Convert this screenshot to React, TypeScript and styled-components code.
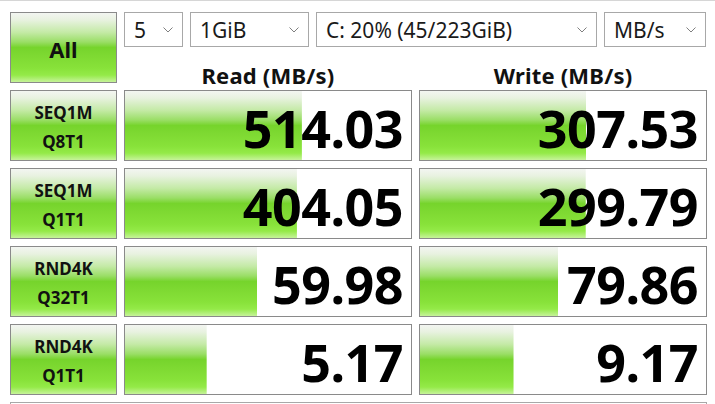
import React, { ReactElement } from "react";
import styled, { createGlobalStyle } from "styled-components";

const GlobalStyle = createGlobalStyle`
	html, body {
		margin: 0;
		padding: 0;
		background: #ffffff;
		overflow: hidden;
	}
	body {
		font-family: "Noto Sans", "Open Sans", sans-serif;
		color: #000;
	}
`;

const GREEN = `linear-gradient(
	to bottom,
	#f3f5f1 0%,
	#e8f2e0 10%,
	#c4eaa6 28%,
	#9ade66 42%,
	#76d42c 50%,
	#7ed932 62%,
	#88e23a 80%,
	#94ea48 90%,
	#c6f39a 100%
)`;

interface Row {
	name: string;
	sub: string;
	read: number;
	write: number;
}

const rows: Row[] = [
	{ name: "SEQ1M", sub: "Q8T1", read: 514.03, write: 307.53 },
	{ name: "SEQ1M", sub: "Q1T1", read: 404.05, write: 299.79 },
	{ name: "RND4K", sub: "Q32T1", read: 59.98, write: 79.86 },
	{ name: "RND4K", sub: "Q1T1", read: 5.17, write: 9.17 },
];

// CrystalDiskMark style log scale bar
function barPercent(v: number): number {
	const r = Math.log10(v * 10) / 6;
	return Math.max(0, Math.min(1, r)) * 100;
}

function Chevron(): ReactElement {
	return (
		<ChevronSvg viewBox="0 0 10 6" width={10} height={6}>
			<path d="M0.5 0.5 L5 5 L9.5 0.5" fill="none" stroke="#707070" strokeWidth="0.9" />
		</ChevronSvg>
	);
}

export default function App(): ReactElement {
	return (
		<>
			<GlobalStyle />
			<Page>
				<Grid>
					<AllButton>All</AllButton>
					<TopArea>
						<Combos>
							<Combo $w={59}>
								<span>5</span>
								<Chevron />
							</Combo>
							<Combo $w={119}>
								<span>1GiB</span>
								<Chevron />
							</Combo>
							<Combo $w={281}>
								<span>C: 20% (45/223GiB)</span>
								<Chevron />
							</Combo>
							<Combo $w={102}>
								<span>MB/s</span>
								<Chevron />
							</Combo>
						</Combos>
						<Headers>
							<Header>Read (MB/s)</Header>
							<Header>Write (MB/s)</Header>
						</Headers>
					</TopArea>

					{rows.map((r, i) => (
						<React.Fragment key={i}>
							<TestLabel>
								<span>{r.name}</span>
								<span>{r.sub}</span>
							</TestLabel>
							<ResultCell style={{ backgroundSize: `${barPercent(r.read)}% 100%` }}>
								{r.read.toFixed(2)}
							</ResultCell>
							<ResultCell style={{ backgroundSize: `${barPercent(r.write)}% 100%` }}>
								{r.write.toFixed(2)}
							</ResultCell>
						</React.Fragment>
					))}

					<Comment />
				</Grid>
			</Page>
		</>
	);
}

const Page = styled.div`
	width: 715px;
	height: 404px;
	box-sizing: border-box;
	border-top: 1px solid #d6d6d6;
	padding: 11px 0 0 10px;
	overflow: hidden;
`;

const Grid = styled.div`
	display: grid;
	grid-template-columns: 107px 288px 288px;
	grid-auto-rows: 71px;
	gap: 7px;
`;

const AllButton = styled.div`
	box-sizing: border-box;
	border: 1px solid #8a8a8a;
	background: ${GREEN};
	display: flex;
	align-items: center;
	justify-content: center;
	padding-top: 2px;
	font-size: 22px;
	font-weight: 700;
	color: #111;
`;

const TopArea = styled.div`
	grid-column: 2 / span 2;
	display: flex;
	flex-direction: column;
`;

const Combos = styled.div`
	display: flex;
	gap: 7px;
	height: 35px;
`;

const Combo = styled.div<{ $w: number }>`
	box-sizing: border-box;
	width: ${(p) => p.$w}px;
	height: 35px;
	border: 1px solid #a8a8a8;
	background: #fff;
	display: flex;
	align-items: center;
	justify-content: space-between;
	padding: 1px 9px 0 9px;
	font-size: 21px;
	color: #1a1a1a;

	span {
		white-space: nowrap;
		line-height: 1;
	}
`;

const ChevronSvg = styled.svg`
	flex: none;
`;

const Headers = styled.div`
	flex: 1;
	display: grid;
	grid-template-columns: 288px 288px;
	gap: 7px;
`;

const Header = styled.div`
	display: flex;
	align-items: center;
	justify-content: center;
	padding-top: 17px;
	font-size: 22px;
	line-height: 1;
	font-weight: 700;
	letter-spacing: 0.2px;
	color: #111;
	white-space: nowrap;
`;

const TestLabel = styled.div`
	box-sizing: border-box;
	border: 1px solid #8a8a8a;
	background: ${GREEN};
	display: flex;
	flex-direction: column;
	align-items: center;
	justify-content: center;
	font-size: 17px;
	font-weight: 700;
	line-height: 29px;
	color: #111;
	padding-top: 2px;
`;

const ResultCell = styled.div`
	box-sizing: border-box;
	border: 1px solid #8a8a8a;
	background-color: #fff;
	background-image: ${GREEN};
	background-repeat: no-repeat;
	background-position: left top;
	display: flex;
	align-items: center;
	justify-content: flex-end;
	padding: 5px 8px 0 0;
	font-size: 52px;
	font-weight: 700;
	line-height: 1;
	letter-spacing: -0.5px;
	color: #000;
`;

const Comment = styled.div`
	grid-column: 1 / span 3;
	box-sizing: border-box;
	height: 30px;
	border: 1px solid #a8a8a8;
`;
